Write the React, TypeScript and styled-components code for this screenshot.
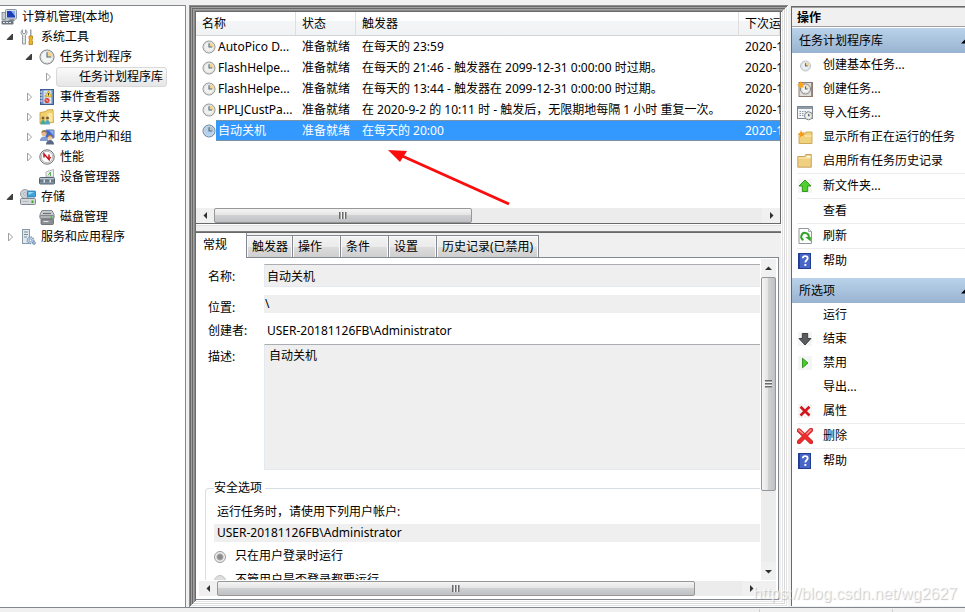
import React from "react";
import styled, { createGlobalStyle, css } from "styled-components";

const GlobalStyle = createGlobalStyle`
  * { box-sizing: border-box; }
  body {
    margin: 0;
    background: #f0f0f0;
    color: #000;
    font: 12px/18px "Noto Sans", "Noto Sans CJK SC", sans-serif;
  }
  button, input, textarea { font: inherit; color: inherit; }
`;

/* ---------- window ---------- */

const Window = styled.div`
  display: flex;
  flex-direction: column;
  height: 100vh;
  overflow: hidden;
  padding-top: 5px;
  position: relative;
`;

const Columns = styled.main`
  flex: 1;
  min-height: 0;
  display: flex;
  gap: 3px;
`;

const StatusBar = styled.footer`
  height: 5px;
  flex: none;
  display: flex;
  justify-content: flex-end;
  border-top: 1px solid #828790;
  padding-top: 1px;
`;

const StatusCell = styled.div<{ $width: number }>`
  width: ${(p) => p.$width}px;
  border-left: 1px solid #d0d0d0;
`;

const Watermark = styled.div`
  position: absolute;
  right: 8px;
  bottom: 8px;
  font: 16px/20px "Liberation Sans", sans-serif;
  color: rgba(255, 255, 255, 0.7);
  text-shadow: 1px 1px 1px rgba(160, 160, 160, 0.6);
  pointer-events: none;
`;

/* ---------- console tree ---------- */

const TreePane = styled.nav`
  flex: 0 0 186px;
  background: #fff;
  border: 1px solid #828790;
  border-width: 1px 1px 0 0;
  padding-top: 1px;
`;

const TreeList = styled.ul`
  list-style: none;
  margin: 0;
  padding: 0;
`;

const TreeRow = styled.li<{ $depth: number }>`
  display: flex;
  align-items: center;
  height: 20px;
  padding-left: ${(p) => (p.$depth === 0 ? 1 : (p.$depth - 1) * 19)}px;
  white-space: nowrap;
`;

const Expander = styled.button`
  flex: 0 0 20px;
  height: 20px;
  padding: 0 0 0 6px;
  border: 0;
  background: none;
  display: flex;
  align-items: center;
`;

const ExpanderSpace = styled.span`
  flex: 0 0 20px;
`;

const TreeLabel = styled.span<{ $selected?: boolean }>`
  display: flex;
  align-items: center;
  gap: 5px;
  height: 20px;
  ${(p) =>
    p.$selected &&
    css`
      margin-left: -2px;
      padding: 0 3px 0 1px;
      border: 1px solid #d9d9d9;
      border-radius: 3px;
      background: linear-gradient(#fafafa, #e6e6e6);
    `}
`;

const IconBox = styled.span`
  display: flex;
  flex: 0 0 16px;
  height: 16px;
`;

/* ---------- centre frame ---------- */

const CentreFrame = styled.section`
  flex: 1;
  min-width: 0;
  display: flex;
  flex-direction: column;
  padding: 7px;
  box-shadow: inset 1px 1px #8c8c8c, inset -1px -1px #fff, inset 2px 2px #696969,
    inset -2px -2px #e3e3e3, inset 3px 3px #a0a0a0, inset -3px -3px #fff,
    inset 4px 4px #696969, inset -4px -4px #d8d8d8, inset 5px 5px #a0a0a0,
    inset -5px -5px #fff, inset 6px 6px #8c8c8c, inset -6px -6px #e3e3e3,
    inset 7px 7px #696969, inset -7px -7px #fff;
`;

const TaskPane = styled.div`
  flex: none;
  background: #fff;
  border: 1px solid #696969;
  border-width: 0 1px 1px 0;
  position: relative;
`;

const TaskTable = styled.table`
  width: 100%;
  table-layout: fixed;
  border-spacing: 0;
  margin-bottom: 67px;
`;

const HeadCell = styled.th<{ $width?: number }>`
  width: ${(p) => (p.$width ? `${p.$width}px` : "auto")};
  height: 24px;
  padding: 1px 0 0 6px;
  font-weight: 400;
  text-align: left;
  white-space: nowrap;
  overflow: hidden;
  background: linear-gradient(#fff 40%, #f4f5f7 41%, #f1f2f4);
  border-bottom: 1px solid #d5d5d5;
  box-shadow: inset -1px 0 #dfdfdf;
`;

const TaskRow = styled.tr<{ $selected?: boolean }>`
  height: 21px;
  color: ${(p) => (p.$selected ? "#fff" : "#000")};
  td:not(:first-child),
  td:first-child > div > span:last-child {
    ${(p) =>
      p.$selected &&
      css`
        background: #3399ff;
        box-shadow: inset 0 1px #7f93a8, inset 0 -1px #7f93a8;
      `}
  }
`;

const TaskCell = styled.td`
  padding: 0 0 0 6px;
  white-space: nowrap;
  overflow: hidden;
  line-height: 21px;
`;

const NameCell = styled.div`
  display: flex;
  align-items: center;
  height: 21px;
`;

const NameText = styled.span`
  flex: 1;
  padding-left: 2px;
`;

const Arrow = styled.svg`
  position: absolute;
  left: 190px;
  top: 134px;
  width: 126px;
  height: 62px;
  pointer-events: none;
`;

/* ---------- scroll bars ---------- */

const ScrollBar = styled.div<{ $vertical?: boolean }>`
  display: flex;
  flex: 0 0 15px;
  flex-direction: ${(p) => (p.$vertical ? "column" : "row")};
  min-height: 15px;
  background: #ececec;
`;

const ScrollButton = styled.button`
  flex: 0 0 18px;
  padding: 0;
  border: 0;
  background: #f0f0f0;
  display: flex;
  align-items: center;
  justify-content: center;
`;

const ScrollTrack = styled.div<{ $vertical?: boolean }>`
  flex: 1;
  min-width: 0;
  min-height: 0;
  display: flex;
  flex-direction: ${(p) => (p.$vertical ? "column" : "row")};
`;

const ScrollThumb = styled.div<{ $vertical?: boolean; $share: number }>`
  flex: 0 0 ${(p) => p.$share}%;
  display: flex;
  align-items: center;
  justify-content: center;
  border: 1px solid #979797;
  border-radius: 2px;
  background: linear-gradient(
    ${(p) => (p.$vertical ? "to right" : "to bottom")},
    #f5f5f5,
    #e4e4e6 45%,
    #cfd0d2 50%,
    #c0c1c4
  );
`;

const Grip = styled.span<{ $vertical?: boolean }>`
  width: ${(p) => (p.$vertical ? 7 : 8)}px;
  height: ${(p) => (p.$vertical ? 8 : 7)}px;
  background: repeating-linear-gradient(
    ${(p) => (p.$vertical ? "to bottom" : "to right")},
    #6a6a6a 0 1px,
    #a8a8a8 1px 2px,
    #f4f4f4 2px 3px
  );
`;

/* ---------- details ---------- */

const Splitter = styled.div`
  flex: 0 0 8px;
  background: linear-gradient(#fff 0 1px, #e3e3e3 1px 2px, #f0f0f0 2px 7px, #808080 7px);
`;

const DetailPane = styled.div`
  flex: 1;
  min-height: 0;
  display: flex;
  flex-direction: column;
  border-top: 1px solid #696969;
  padding-right: 2px;
  background: #f0f0f0;
`;

const TabList = styled.div`
  display: flex;
  align-items: flex-end;
  height: 25px;
  flex: none;
  box-shadow: inset 0 -1px #828790;
`;

const Tab = styled.button<{ $active?: boolean; $width: number }>`
  flex: 0 0 ${(p) => p.$width}px;
  height: ${(p) => (p.$active ? 25 : 23)}px;
  padding: ${(p) => (p.$active ? "0 0 1px 7px" : "1px 0 0 5px")};
  text-align: left;
  white-space: nowrap;
  border: 1px solid #828790;
  border-left-width: 0;
  background: linear-gradient(#f3f3f3, #ebebeb 50%, #dddddd 51%, #cfcfcf);
  box-shadow: inset 1px 1px #fafafa, inset -1px 0 #fafafa;
  ${(p) =>
    p.$active &&
    css`
      border-width: 0 1px 0 0;
      background: #fff;
      box-shadow: none;
    `}
`;

const TabPanel = styled.div`
  flex: 1;
  min-height: 0;
  display: flex;
  flex-direction: column;
  padding: 1px 2px 3px 3px;
  background: #fff;
  border: 1px solid #828790;
  border-width: 0 1px 1px 0;
`;

const PanelRow = styled.div`
  display: flex;
  flex: 1;
  min-height: 0;
  gap: 1px;
`;

const PanelFoot = styled.div`
  display: flex;
  flex: none;
  margin-top: 1px;
  background: #f0f0f0;
  padding-right: 16px;
  & > div {
    flex: 1;
  }
`;

const Form = styled.form`
  flex: 1;
  min-width: 0;
  overflow: hidden;
  padding-top: 5px;
`;

const Field = styled.div<{ $gap: number }>`
  display: flex;
  align-items: flex-start;
  margin-bottom: ${(p) => p.$gap}px;
`;

const FieldLabel = styled.label<{ $flush?: boolean }>`
  flex: 0 0 65px;
  padding: ${(p) => (p.$flush ? 0 : 4)}px 0 0 9px;
`;

const TextBox = styled.input<{ $plain?: boolean; $white?: boolean }>`
  flex: 1;
  min-width: 0;
  height: ${(p) => (p.$plain ? 18 : 23)}px;
  padding: 0 2px;
  border: 1px solid #e3e9ef;
  border-top-color: #abadb3;
  border-right: 0;
  background: ${(p) => (p.$white ? "#fff" : "#efefef")};
  outline: 0;
  ${(p) =>
    p.$plain &&
    css`
      border: 0;
      padding: 0 3px;
    `}
`;

const PathBox = styled(TextBox)`
  padding: 0 1px;
`;

const Description = styled.textarea`
  flex: 1;
  min-width: 0;
  height: 126px;
  padding: 2px 4px;
  border: 1px solid #e3e9ef;
  border-top-color: #abadb3;
  border-right: 0;
  background: #efefef;
  resize: none;
  outline: 0;
`;

const Security = styled.fieldset`
  margin: 0 0 0 6px;
  padding: 3px 0 0 8px;
  border: 1px solid #d5dfe5;
  border-right: 0;
  border-radius: 4px 0 0 0;
  min-width: 0;
`;

const SecurityLegend = styled.legend`
  padding: 0 3px 0 0;
`;

const AccountLabel = styled.label`
  display: block;
  padding: 3px 0 3px 3px;
`;

const AccountBox = styled(TextBox)`
  display: block;
  width: 100%;
  margin-bottom: 2px;
`;

const RadioLabel = styled.label`
  display: flex;
  align-items: center;
  gap: 9px;
  height: 24px;
`;

const Radio = styled.input`
  appearance: none;
  width: 12px;
  height: 12px;
  margin: 2px 0 0;
  border: 1px solid #c4c4c4;
  border-radius: 50%;
  background: #dedede;
  &:checked {
    background: radial-gradient(circle, #8c8c8c 0 2px, #a8a8a8 3px, #efefef 4px);
    border-color: #9c9c9c;
  }
`;

/* ---------- actions ---------- */

const ActionPane = styled.aside`
  flex: 0 0 174px;
  margin: 1px 0 1px 0;
  background: #fff;
  border: 1px solid #696969;
  border-width: 1px 0 0 1px;
  box-shadow: inset 0 1px #a0a0a0;
  white-space: nowrap;
  overflow: hidden;
`;

const ActionTitle = styled.h2`
  margin: 1px 0 1px;
  padding: 2px 5px 0;
  height: 19px;
  font-size: 12px;
  line-height: 16px;
  font-weight: 700;
  background: #f0f0f0;
  border-bottom: 1px solid #a0a0a0;
`;

const SectionHeader = styled.button`
  display: flex;
  align-items: center;
  justify-content: space-between;
  width: 100%;
  height: 25px;
  padding: 0 0 0 7px;
  border: 0;
  background: linear-gradient(#bad2ea, #99b4d1);
  margin-bottom: -1px;
`;

const ActionList = styled.ul`
  list-style: none;
  margin: 0 0 5px;
  padding: 1px 0 0 5px;
`;

const ActionItem = styled.li<{ $ruled?: boolean }>`
  border-bottom: ${(p) => (p.$ruled ? "1px solid #ececec" : "0")};
`;

const ActionButton = styled.button`
  display: flex;
  align-items: center;
  gap: 10px;
  height: 24px;
  width: 100%;
  padding: 0;
  border: 0;
  background: none;
`;

/* ---------- icons ---------- */

const Svg = ({ children }: { children?: React.ReactNode }) => (
  <svg width="16" height="16" viewBox="0 0 16 16" aria-hidden="true">
    {children}
  </svg>
);

const ClockFace = ({ cx = 8, cy = 8, r = 7, face = "#f4f4f0", rim = "#8b8d90", wedge = "#f3d591" }) => (
  <>
    <circle cx={cx} cy={cy} r={r} fill={face} stroke={rim} />
    <circle cx={cx} cy={cy} r={r - 1} fill="none" stroke="#d3d5d8" strokeWidth=".8" />
    <path d={`M${cx} ${cy}V${cy - r + 1.4}A${r - 1.4} ${r - 1.4} 0 0 1 ${cx + r - 1.4} ${cy}Z`} fill={wedge} />
    <path d={`M${cx} ${cy - r + 2.2}V${cy}H${cx + r - 2.8}`} fill="none" stroke="#4d6b8a" strokeWidth="1.1" />
  </>
);

const icons: Record<string, React.ReactNode> = {
  blank: <Svg />,
  computer: (
    <Svg>
      <rect x="4.500" y="0.5" width="11" height="9.500" rx="1" fill="#d8dde4" stroke="#8b96a4" />
      <rect x="6" y="2" width="8" height="6.500" fill="#1b3fb8" />
      <path d="M10 2h4v5z" fill="#8fb0f0" />
      <rect x="1" y="3.500" width="3.500" height="7" fill="#c5ccd4" stroke="#78828e" strokeWidth=".8" />
      <path d="M9 10h4l1 2H7z" fill="#8e98a3" />
      <rect x=".5" y="11.500" width="12" height="4" rx="1" fill="#6b7681" />
      <path d="M2 13.500h2m1 0h2m1 0h2" stroke="#dfe5ea" />
    </Svg>
  ),
  tools: (
    <Svg>
      <path d="M2.500 .8v3L4 4.800l1.500-1v-3c2 1 2 4 0 5.500V15H2.500V6.300C.6 4.800.6 1.800 2.500.8z" fill="#e3e6e9" stroke="#7d848b" strokeWidth=".8" />
      <path d="M10 .5h1.500V7H10z" fill="#9aa2ab" />
      <path d="M9 7h3.500v3l-.8 1 .8 1v3.500H9V12l.8-1-.8-1z" fill="#f0b421" stroke="#a9730c" strokeWidth=".7" />
    </Svg>
  ),
  clock: (
    <Svg>
      <ClockFace rim="#6f7174" />
    </Svg>
  ),
  event: (
    <Svg>
      <rect x="1.500" y=".5" width="13" height="15" fill="#6b8fc4" stroke="#3c5c94" />
      <rect x="4.500" y="1.500" width="8" height="13" fill="#dce6f2" />
      <path d="M5.500 4h2M5.500 6.500h2M5.500 9h2" stroke="#8ea6c4" strokeWidth=".8" />
      <path d="M1 3h2.500M1 6h2.500M1 9h2.500M1 12h2.500" stroke="#e6ebf2" />
      <path d="M9.500 1.800l3.500 6H6z" fill="#ffd83a" stroke="#b58b0b" strokeWidth=".6" />
      <path d="M9.500 4v2.500" stroke="#333" strokeWidth=".9" />
      <circle cx="8" cy="11.500" r="2.600" fill="#d8453c" />
      <path d="M7 10.500l2 2" stroke="#fff" strokeWidth=".9" />
    </Svg>
  ),
  share: (
    <Svg>
      <path d="M1 3.500l6-1 1-1.500 6-.5.5 13-13.500 1z" fill="#f2cf6d" stroke="#c49a38" strokeWidth=".8" />
      <path d="M8.500 4.500l5-.8v8.800l-5 1.500z" fill="#fbe7a1" />
      <circle cx="4" cy="9" r="1.500" fill="#7a5c3c" />
      <circle cx="8.500" cy="9" r="1.500" fill="#7a5c3c" />
      <path d="M1.500 15.500c0-6 5-6 5 0z" fill="#4aa896" />
      <path d="M6 15.500c0-6 5-6 5 0z" fill="#56a4b8" />
    </Svg>
  ),
  users: (
    <Svg>
      <rect x="6.500" y=".8" width="8.700" height="8.500" rx=".8" fill="#3d68cc" stroke="#a3adbb" />
      <path d="M10 1.500h4.500v5z" fill="#8fb1ef" />
      <circle cx="5" cy="4.500" r="2.600" fill="#e6b98e" />
      <path d="M2.400 4c0-3.800 5.500-4 5.200 0L5 2.800z" fill="#9a7440" />
      <path d="M.8 12c0-6 8.400-6 8.400 0z" fill="#7f9dd2" />
      <circle cx="11" cy="8.800" r="2.400" fill="#efc9a4" />
      <path d="M8.600 8.200c0-3.400 4.900-3.400 4.900 0L11 7z" fill="#a87534" />
      <path d="M7 15.500c0-6 8-6 8 0z" fill="#5c6785" />
    </Svg>
  ),
  perf: (
    <Svg>
      <circle cx="8" cy="8" r="7.200" fill="#f4f4f4" stroke="#6b6d70" />
      <circle cx="8" cy="8" r="5.700" fill="#fff" stroke="#b9bbbe" />
      <path d="M5 8.500V5l5 5.500V5.500" fill="none" stroke="#c5161d" strokeWidth="1.500" />
      <path d="M10 10.500l2-2.500" fill="none" stroke="#c5161d" strokeWidth="1.200" />
    </Svg>
  ),
  device: (
    <Svg>
      <path d="M7 8V3l7.500-2.500V8z" fill="#eef0f2" stroke="#9aa1a9" strokeWidth=".8" />
      <path d="M9 6.500l2.500-3.500v4" fill="none" stroke="#5aa856" />
      <rect x=".5" y="8.500" width="15" height="6.500" rx="1" fill="#8292a2" stroke="#566472" />
      <path d="M1 9.500h14" stroke="#bcc6d0" />
      <path d="M1 12h14" stroke="#4e5a66" strokeWidth=".8" />
      <path d="M4.500 10.500h1.500v3H4.500zM10.500 10.500H12v3h-1.500z" fill="#dfe4e9" />
    </Svg>
  ),
  storage: (
    <Svg>
      <circle cx="5" cy="5" r="4.500" fill="#cdd2d7" stroke="#969da5" />
      <circle cx="5" cy="5" r="1.300" fill="#fff" stroke="#868d95" strokeWidth=".6" />
      <rect x="7.500" y="2" width="8" height="6" rx=".8" fill="#3ea3d8" stroke="#2f749e" strokeWidth=".8" />
      <path d="M8.500 3H14l-5.500 3z" fill="#9adcf6" />
      <rect x=".5" y="9.500" width="15" height="6" rx="1" fill="#d4d8dc" stroke="#7e868e" />
      <rect x="11.500" y="11.500" width="2" height="2.500" fill="#41b02d" />
      <path d="M2.500 12.500h6" stroke="#b0b6bc" />
    </Svg>
  ),
  disk: (
    <Svg>
      <path d="M3 1.500h10l2 4v3H1v-3z" fill="#c9cccf" stroke="#85898d" />
      <path d="M4 4.500h8" stroke="#6e7276" strokeWidth="1.200" />
      <rect x="1" y="6.500" width="14" height="3.500" rx="1" fill="#b0b4b8" stroke="#777b7f" strokeWidth=".8" />
      <rect x="2" y="10" width="12.500" height="5.500" rx="1" fill="#8b8f93" stroke="#5e6266" strokeWidth=".8" />
      <path d="M4.500 12.500h5" stroke="#e6e8ea" />
      <rect x="11.500" y="7.300" width="1.800" height="1.800" fill="#4cc234" />
    </Svg>
  ),
  services: (
    <Svg>
      <rect x="2.500" y=".5" width="7" height="14" fill="#e3e8ec" stroke="#8c98a4" />
      <path d="M4 3h4M4 5.500h4M4 8h3" stroke="#6f8f9c" />
      <circle cx="10.500" cy="11.300" r="3.200" fill="#c8d9e8" stroke="#7a9aba" strokeDasharray="1.300 .8" strokeWidth="1.600" />
      <circle cx="10.500" cy="11.300" r="1.200" fill="#fff" stroke="#6286a8" strokeWidth=".7" />
      <circle cx="14" cy="14" r="1.500" fill="#a4bed6" stroke="#6286a8" strokeWidth=".6" />
    </Svg>
  ),
  basicTask: (
    <Svg>
      <ClockFace cx={8.5} cy={9} r={5} face="#eef1f4" rim="#b9c2cc" />
    </Svg>
  ),
  createTask: (
    <Svg>
      <rect x="2" y="1.500" width="13.500" height="14" fill="#e2ddd8" stroke="#8c7d73" />
      <path d="M14.500 2v13" stroke="#9c8a80" />
      <ClockFace cx={8.5} cy={8} r={5} rim="#7a8086" wedge="#f4e3bd" />
      <path d="M3.500 0l1.200 2.300 2.800-.3-1.700 2.200 1.200 2.600-2.700-.8L2 8V5.200L0 3.800l2.500-.9z" fill="#f9a51a" />
    </Svg>
  ),
  importTask: (
    <Svg>
      <rect x=".5" y="1.500" width="15" height="12" fill="#f3f5f7" stroke="#7d8792" />
      <path d="M1 3h14" stroke="#8e9baa" strokeWidth="2" />
      <path d="M2.500 6.500h8M2.500 8.500h5M2.500 10.500h4" stroke="#8b96a2" strokeDasharray="1.500 1" />
      <ClockFace cx={11.5} cy={10.8} r={4} rim="#7a828a" />
    </Svg>
  ),
  runningTasks: (
    <Svg>
      <path d="M2 5h6l1-2h6v11.500H2z" fill="#f0d27c" stroke="#c29a3e" strokeWidth=".8" />
      <path d="M2.500 7h12" stroke="#fbeebb" />
      <path d="M4 1l1 2.500 2.800-.3-1.600 2.200 1.200 2.400-2.600-.8-2 1.800V6L.5 4.800 3 4z" fill="#f59a14" />
    </Svg>
  ),
  folder: (
    <Svg>
      <path d="M.8 3.500h7l1-2h5.500v12.700H.8z" fill="#efcf80" stroke="#bb9345" strokeWidth=".8" />
      <path d="M9.500 3h4v1.500h-4z" fill="#fff" />
      <path d="M1.500 5h12" stroke="#fbeab5" />
    </Svg>
  ),
  up: (
    <Svg>
      <rect x="1" y="1" width="14" height="14" fill="#f5f5f5" />
      <path d="M8 2l6 6h-3.300v5.500H5.300V8H2z" fill="#4fd02c" stroke="#2b8c17" strokeWidth=".9" />
    </Svg>
  ),
  refresh: (
    <Svg>
      <path d="M2 .5h9.500L14.500 3.500v12H2z" fill="#fff" stroke="#92979d" />
      <path d="M11.500.5v3h3" fill="#dfe3e6" stroke="#92979d" strokeWidth=".7" />
      <path d="M6.500 12A3.700 3.700 0 1 1 11.600 9.500" fill="none" stroke="#31a12a" strokeWidth="2" />
      <path d="M8.300 9h5.500v4.500z" fill="#31a12a" />
    </Svg>
  ),
  help: (
    <Svg>
      <rect x="1.500" y=".5" width="12" height="15" fill="#4667c8" stroke="#223c8f" />
      <path d="M2.500 1v14" stroke="#2a3f96" />
      <path d="M5.800 5.300c0-2.800 4.900-2.800 4.900 0 0 2-2.400 2-2.400 4.200" fill="none" stroke="#fff" strokeWidth="1.800" />
      <rect x="7.400" y="11" width="1.900" height="1.900" fill="#fff" />
    </Svg>
  ),
  down: (
    <Svg>
      <rect x="1" y="1" width="14" height="14" fill="#f5f5f5" />
      <path d="M5.300 2.500h5.400v5H14L8 14 2 7.500h3.300z" fill="#5a5c5f" stroke="#34363a" strokeWidth=".9" />
    </Svg>
  ),
  play: (
    <Svg>
      <rect x="1" y="1" width="14" height="14" fill="#f5f5f5" />
      <path d="M5.500 3.200l5.500 4.800-5.500 4.800z" fill="#46cf2b" stroke="#2b8f1a" strokeWidth=".9" />
    </Svg>
  ),
  cross: (
    <Svg>
      <rect x="1" y="1" width="14" height="14" fill="#f5f5f5" />
      <path d="M3.500 3.800l9 8.700M12.500 3.800l-9 8.700" stroke="#d2161b" strokeWidth="2.600" />
    </Svg>
  ),
  bigCross: (
    <Svg>
      <path d="M2 2.500l12 11.500M14 2L2 14" stroke="#b9262a" strokeWidth="4.400" strokeLinecap="round" />
      <path d="M2 2.500l12 11.500M14 2L2 14" stroke="#ee2b2b" strokeWidth="3.200" strokeLinecap="round" />
      <path d="M1.800 2l4 3.500M14 1.700l-4 4" stroke="#f79a97" strokeWidth="1.400" strokeLinecap="round" />
    </Svg>
  ),
};

const TaskIcon = ({ selected }: { selected?: boolean }) => (
  <svg width="14" height="14" viewBox="0 0 14 14" aria-hidden="true">
    <ClockFace
      cx={7}
      cy={7}
      r={6}
      face={selected ? "#b5d1ee" : "#f1f1ec"}
      rim={selected ? "#5d7f9f" : "#8b8d90"}
      wedge={selected ? "#b3c3bd" : "#f3d591"}
    />
  </svg>
);

const OpenMark = () => (
  <svg width="8" height="8" viewBox="0 0 8 8" aria-hidden="true">
    <path d="M6.500 1v5.500H1z" fill="#404040" stroke="#262626" strokeWidth=".8" />
  </svg>
);

const ClosedMark = () => (
  <svg width="8" height="10" viewBox="0 0 8 10" aria-hidden="true">
    <path d="M2.500 1l4 4-4 4z" fill="#fff" stroke="#a0a0a0" />
  </svg>
);

const arrowPaths = {
  left: "M6 1v7L2.500 4.500z",
  right: "M3 1v7l3.500-3.500z",
  up: "M1 6h7L4.500 2.500z",
  down: "M1 3h7L4.500 6.500z",
};

const ArrowMark = ({ dir }: { dir: keyof typeof arrowPaths }) => (
  <svg width="9" height="9" viewBox="0 0 9 9" aria-hidden="true">
    <path d={arrowPaths[dir]} fill="#303030" />
  </svg>
);

const Scroller = ({ vertical, share }: { vertical?: boolean; share: number }) => (
  <ScrollBar $vertical={vertical}>
    <ScrollButton type="button" aria-label={vertical ? "向上滚动" : "向左滚动"}>
      <ArrowMark dir={vertical ? "up" : "left"} />
    </ScrollButton>
    <ScrollTrack $vertical={vertical}>
      <ScrollThumb $vertical={vertical} $share={share}>
        <Grip $vertical={vertical} />
      </ScrollThumb>
    </ScrollTrack>
    <ScrollButton type="button" aria-label={vertical ? "向下滚动" : "向右滚动"}>
      <ArrowMark dir={vertical ? "down" : "right"} />
    </ScrollButton>
  </ScrollBar>
);

/* ---------- data ---------- */

type Node = { depth: number; icon: string; label: string; open?: boolean; selected?: boolean };

const tree: Node[] = [
  { depth: 0, icon: "computer", label: "计算机管理(本地)" },
  { depth: 1, icon: "tools", label: "系统工具", open: true },
  { depth: 2, icon: "clock", label: "任务计划程序", open: true },
  { depth: 3, icon: "blank", label: "任务计划程序库", open: false, selected: true },
  { depth: 2, icon: "event", label: "事件查看器", open: false },
  { depth: 2, icon: "share", label: "共享文件夹", open: false },
  { depth: 2, icon: "users", label: "本地用户和组", open: false },
  { depth: 2, icon: "perf", label: "性能", open: false },
  { depth: 2, icon: "device", label: "设备管理器" },
  { depth: 1, icon: "storage", label: "存储", open: true },
  { depth: 2, icon: "disk", label: "磁盘管理" },
  { depth: 1, icon: "services", label: "服务和应用程序", open: false },
];

const tasks = [
  { name: "AutoPico D...", trigger: "在每天的 23:59" },
  { name: "FlashHelpe...", trigger: "在每天的 21:46 - 触发器在 2099-12-31 0:00:00 时过期。" },
  { name: "FlashHelpe...", trigger: "在每天的 13:44 - 触发器在 2099-12-31 0:00:00 时过期。" },
  { name: "HPLJCustPa...", trigger: "在 2020-9-2 的 10:11 时 - 触发后，无限期地每隔 1 小时 重复一次。" },
  { name: "自动关机", trigger: "在每天的 20:00", selected: true },
];

const tabs = [
  { label: "常规", width: 51 },
  { label: "触发器", width: 46 },
  { label: "操作", width: 48 },
  { label: "条件", width: 48 },
  { label: "设置", width: 48 },
  { label: "历史记录(已禁用)", width: 102 },
];

type Action = { icon: string; label: string; ruled?: boolean };

const sections: { title: string; actions: Action[] }[] = [
  {
    title: "任务计划程序库",
    actions: [
      { icon: "basicTask", label: "创建基本任务..." },
      { icon: "createTask", label: "创建任务..." },
      { icon: "importTask", label: "导入任务..." },
      { icon: "runningTasks", label: "显示所有正在运行的任务" },
      { icon: "folder", label: "启用所有任务历史记录", ruled: true },
      { icon: "up", label: "新文件夹...", ruled: true },
      { icon: "blank", label: "查看", ruled: true },
      { icon: "refresh", label: "刷新", ruled: true },
      { icon: "help", label: "帮助" },
    ],
  },
  {
    title: "所选项",
    actions: [
      { icon: "blank", label: "运行" },
      { icon: "down", label: "结束" },
      { icon: "play", label: "禁用" },
      { icon: "blank", label: "导出..." },
      { icon: "cross", label: "属性", ruled: true },
      { icon: "bigCross", label: "删除", ruled: true },
      { icon: "help", label: "帮助" },
    ],
  },
];

export default function App() {
  return (
    <Window>
      <GlobalStyle />
      <Columns>
        <TreePane>
          <TreeList>
            {tree.map((n) => (
              <TreeRow key={n.label} $depth={n.depth}>
                {n.depth > 0 &&
                  (n.open === undefined ? (
                    <ExpanderSpace />
                  ) : (
                    <Expander type="button" aria-label={n.label} aria-expanded={n.open}>
                      {n.open ? <OpenMark /> : <ClosedMark />}
                    </Expander>
                  ))}
                <TreeLabel $selected={n.selected}>
                  <IconBox>{icons[n.icon]}</IconBox>
                  {n.label}
                </TreeLabel>
              </TreeRow>
            ))}
          </TreeList>
        </TreePane>

        <CentreFrame>
          <TaskPane>
            <TaskTable>
              <thead>
                <tr>
                  <HeadCell $width={100}>名称</HeadCell>
                  <HeadCell $width={60}>状态</HeadCell>
                  <HeadCell $width={383}>触发器</HeadCell>
                  <HeadCell>下次运行时间</HeadCell>
                </tr>
              </thead>
              <tbody>
                {tasks.map((t, i) => (
                  <TaskRow key={i} $selected={t.selected}>
                    <TaskCell>
                      <NameCell>
                        <TaskIcon selected={t.selected} />
                        <NameText>{t.name}</NameText>
                      </NameCell>
                    </TaskCell>
                    <TaskCell>准备就绪</TaskCell>
                    <TaskCell>{t.trigger}</TaskCell>
                    <TaskCell>2020-1</TaskCell>
                  </TaskRow>
                ))}
              </tbody>
            </TaskTable>
            <Arrow viewBox="0 0 126 62" aria-hidden="true">
              <path d="M123 58L14 9" stroke="#fb0d0d" strokeWidth="3" />
              <path d="M2 4L21 5L14 16z" fill="#fb0d0d" />
            </Arrow>
            <Scroller share={47} />
          </TaskPane>

          <Splitter />

          <DetailPane>
            <TabList role="tablist">
              {tabs.map((t, i) => (
                <Tab key={t.label} type="button" role="tab" aria-selected={i === 0} $active={i === 0} $width={t.width}>
                  {t.label}
                </Tab>
              ))}
            </TabList>
            <TabPanel role="tabpanel">
              <PanelRow>
                <Form>
                  <Field $gap={8}>
                    <FieldLabel htmlFor="name">名称:</FieldLabel>
                    <TextBox id="name" readOnly defaultValue="自动关机" />
                  </Field>
                  <Field $gap={5}>
                    <FieldLabel htmlFor="location">位置:</FieldLabel>
                    <PathBox id="location" $plain readOnly defaultValue="\" />
                  </Field>
                  <Field $gap={4}>
                    <FieldLabel htmlFor="author" $flush>
                      创建者:
                    </FieldLabel>
                    <TextBox id="author" $plain $white readOnly defaultValue="USER-20181126FB\Administrator" />
                  </Field>
                  <Field $gap={9}>
                    <FieldLabel htmlFor="description">描述:</FieldLabel>
                    <Description id="description" readOnly defaultValue="自动关机" />
                  </Field>
                  <Security>
                    <SecurityLegend>安全选项</SecurityLegend>
                    <AccountLabel htmlFor="account">运行任务时，请使用下列用户帐户:</AccountLabel>
                    <AccountBox id="account" $plain readOnly defaultValue="USER-20181126FB\Administrator" />
                    <RadioLabel>
                      <Radio type="radio" name="logon" defaultChecked />
                      只在用户登录时运行
                    </RadioLabel>
                    <RadioLabel>
                      <Radio type="radio" name="logon" />
                      不管用户是否登录都要运行
                    </RadioLabel>
                  </Security>
                </Form>
                <Scroller vertical share={75} />
              </PanelRow>
              <PanelFoot>
                <Scroller share={91} />
              </PanelFoot>
            </TabPanel>
          </DetailPane>
        </CentreFrame>

        <ActionPane>
          <ActionTitle>操作</ActionTitle>
          {sections.map((s) => (
            <React.Fragment key={s.title}>
              <SectionHeader type="button" aria-expanded>
                {s.title}
                <svg width="4" height="6" viewBox="0 0 4 6" aria-hidden="true">
                  <path d="M0 5.500L4 1.500v4z" fill="#000" />
                </svg>
              </SectionHeader>
              <ActionList>
                {s.actions.map((a) => (
                  <ActionItem key={a.label} $ruled={a.ruled}>
                    <ActionButton type="button">
                      <IconBox>{icons[a.icon]}</IconBox>
                      {a.label}
                    </ActionButton>
                  </ActionItem>
                ))}
              </ActionList>
            </React.Fragment>
          ))}
        </ActionPane>
      </Columns>
      <StatusBar>
        <StatusCell $width={133} />
        <StatusCell $width={73} />
      </StatusBar>
      <Watermark>https://blog.csdn.net/wg2627</Watermark>
    </Window>
  );
}
